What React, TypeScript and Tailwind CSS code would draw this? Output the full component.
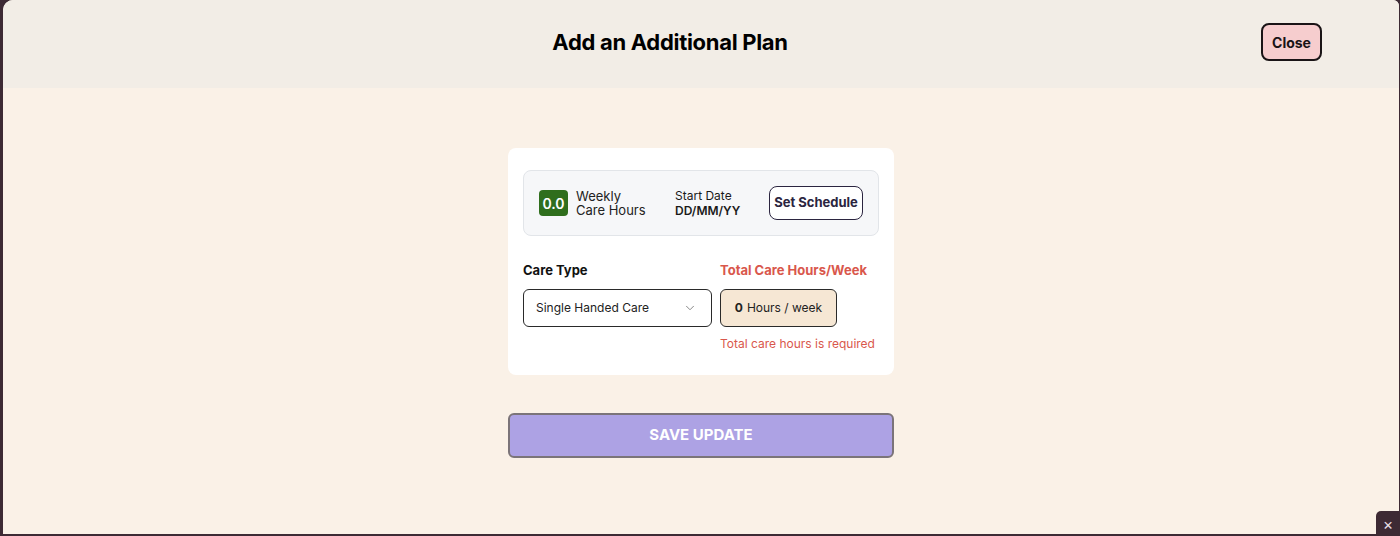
import { ChevronDown } from 'lucide-react';

const App = () => {
  return (
    <div className="h-[536px] w-[1400px] bg-[#3d2a34] pl-[3px] pr-px pb-[2px] overflow-hidden relative" style={{ fontFamily: 'Inter, "Noto Sans", sans-serif' }}>
      <div className="h-full flex flex-col bg-[#faf1e7] rounded-tl-[10px] rounded-tr-[6px] overflow-hidden">
        {/* header */}
        <div className="h-[88px] shrink-0 bg-[#f2ede6] flex items-center justify-center relative">
          <h1 className="mr-[62px] -mt-[4px] text-[22px] font-bold text-black tracking-[-0.3px]">Add an Additional Plan</h1>
          <button className="absolute right-[77px] top-[23px] h-[38px] w-[61px] rounded-lg border-2 border-[#1a1416] bg-[#f6cdce] text-[14px] font-bold text-[#1a1416]">
            Close
          </button>
        </div>

        {/* body */}
        <div className="flex flex-col items-center pt-[60px]">
          <div className="w-[386px] rounded-lg bg-white px-[15px] pt-[22px] pb-[22px]">
            <div className="flex items-center h-[66px] rounded-lg border border-[#e2e5e9] bg-[#f6f7f9] pl-[15px] pr-[15px]">
              <div className="flex items-center gap-[8px] w-[136px]">
                <div className="h-[26px] w-[29px] rounded-[4px] bg-[#2f6e1d] text-white text-[14px] font-semibold flex items-center justify-center">0.0</div>
                <div className="text-[13px] leading-[14px] text-[#222]">
                  <div>Weekly</div>
                  <div>Care Hours</div>
                </div>
              </div>
              <div className="flex flex-col text-[12px] leading-[15px] text-[#1a1a1a]">
                <span>Start Date</span>
                <span className="font-semibold">DD/MM/YY</span>
              </div>
              <button className="ml-auto h-[34px] w-[94px] rounded-lg border border-[#2b2540] bg-white text-[13px] font-bold text-[#2b2540]">
                Set Schedule
              </button>
            </div>

            <div className="mt-[25px] grid grid-cols-[189px_1fr] gap-x-[8px]">
              <div>
                <div className="text-[13px] font-bold text-[#111]">Care Type</div>
                <div className="mt-[8px] h-[38px] rounded-md border border-[#2a2a2a] bg-white flex items-center justify-between pl-[12px] pr-[14px]">
                  <span className="text-[12px] text-[#222]">Single Handed Care</span>
                  <ChevronDown size={14} strokeWidth={1.5} className="text-[#777]" />
                </div>
              </div>
              <div>
                <div className="text-[13px] font-bold text-[#d9574c] whitespace-nowrap">Total Care Hours/Week</div>
                <div className="mt-[8px] h-[38px] w-[117px] rounded-md border border-[#2a2a2a] bg-[#f6e7d4] flex items-center justify-center text-[12px] text-[#222]">
                  <span className="font-bold mr-[4px]">0</span> Hours / week
                </div>
                <div className="mt-[8px] text-[12px] text-[#d9574c]">Total care hours is required</div>
              </div>
            </div>
          </div>

          <button className="mt-[38px] h-[45px] w-[386px] rounded-md border-2 border-[#7b7479] bg-[#ada2e4] text-[15px] font-bold text-white">
            SAVE UPDATE
          </button>
        </div>
      </div>

      <div className="absolute right-0 bottom-0 h-[25px] w-[24px] rounded-tl-[5px] bg-[#3d2a34] flex items-center justify-center text-[#e8dde3] text-[16px] leading-none">
        ×
      </div>
    </div>
  );
};

export default App;
